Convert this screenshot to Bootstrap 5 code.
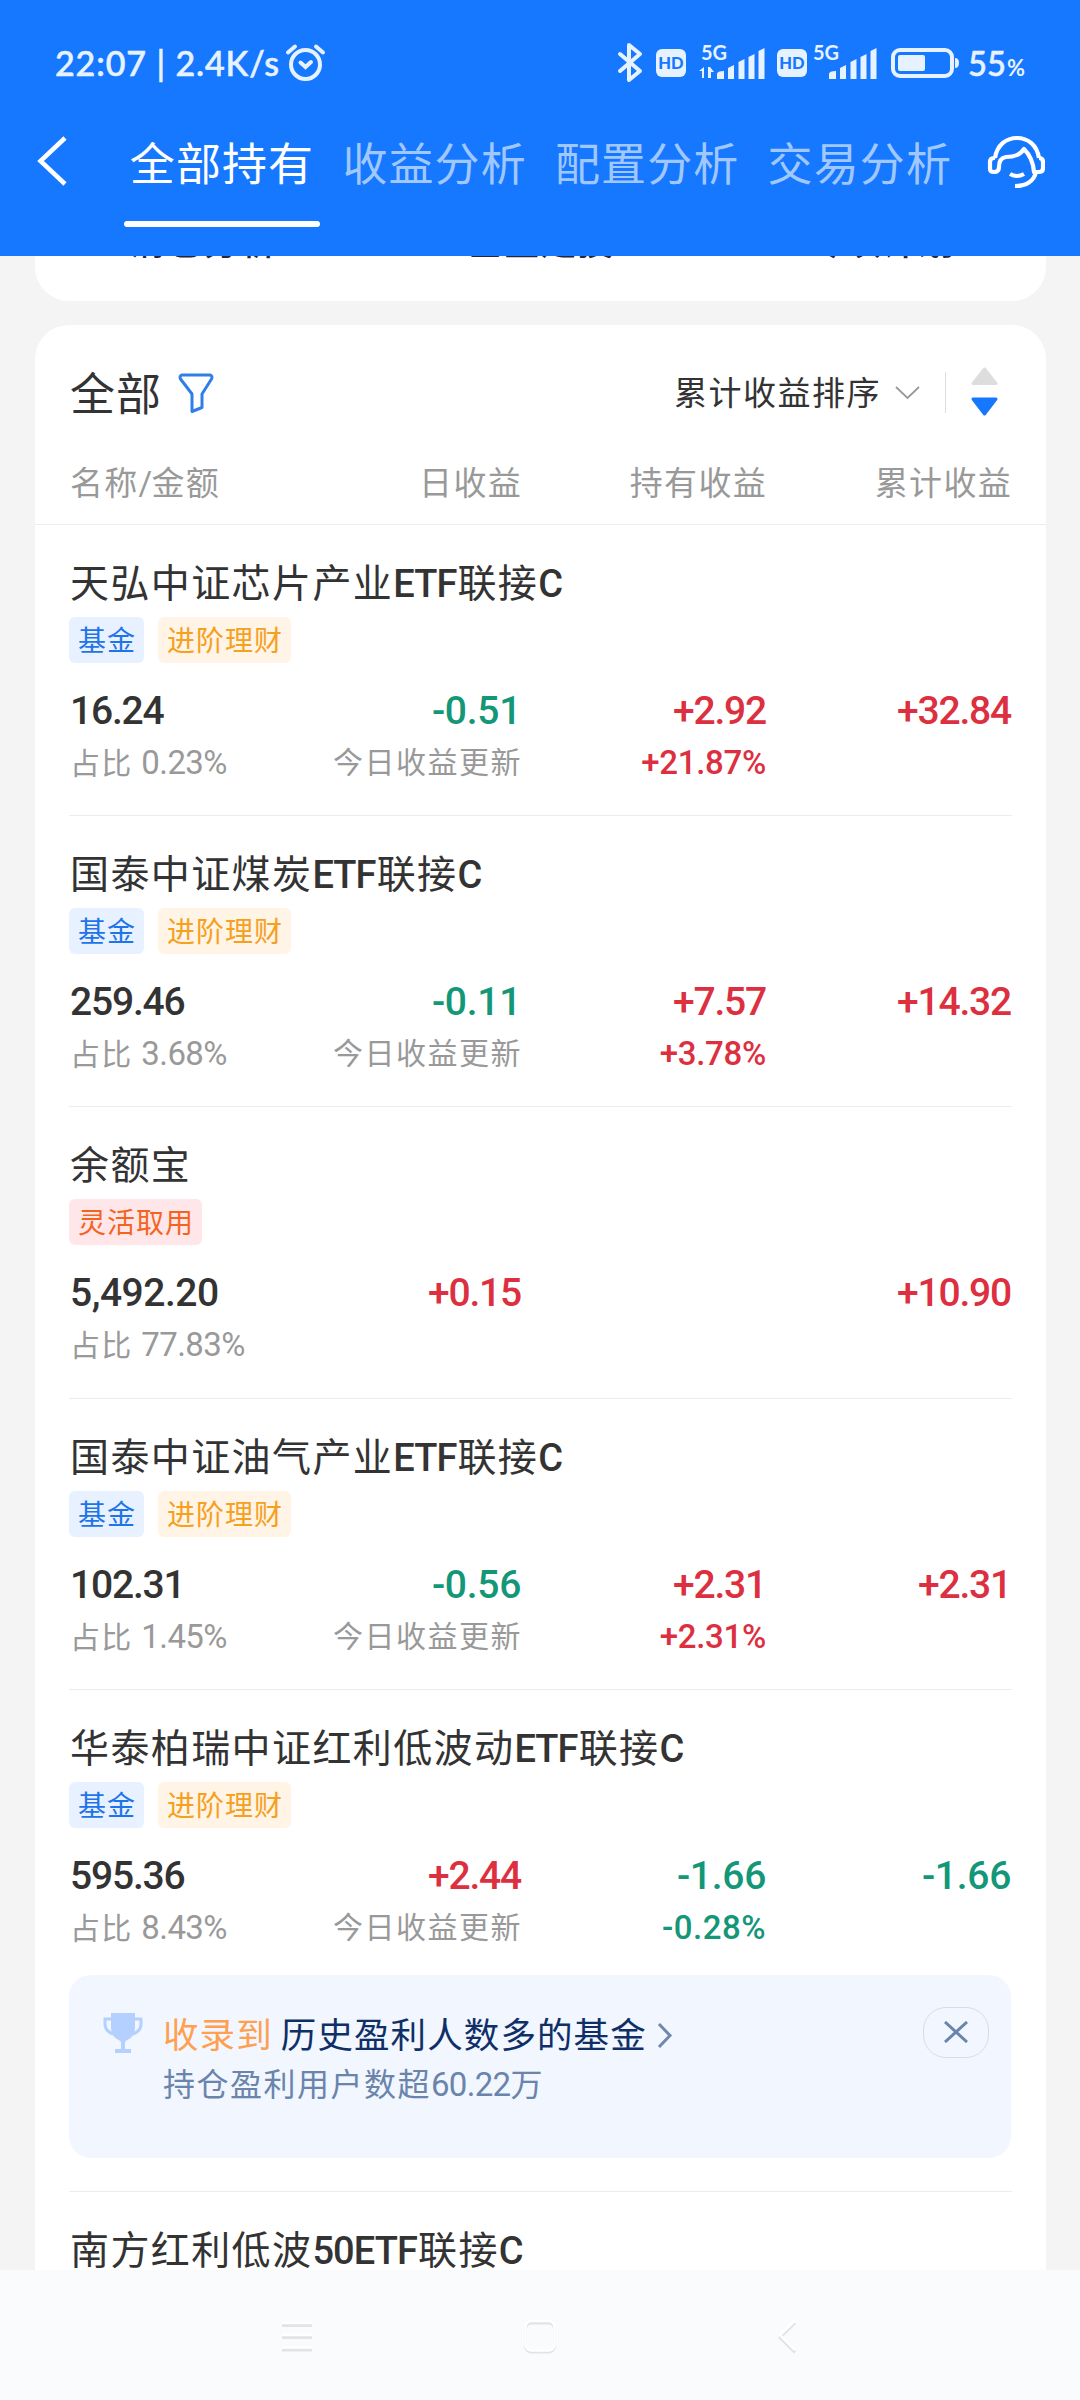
<!DOCTYPE html>
<html lang="zh-CN">
<head>
<meta charset="utf-8">
<meta name="viewport" content="width=device-width, initial-scale=1">
<title>全部持有</title>
<link href="https://cdn.jsdelivr.net/npm/bootstrap@5.3.0/dist/css/bootstrap.min.css" rel="stylesheet">
<style>
  body { width: 1080px; height: 2400px; overflow: hidden; background: #f4f4f4; color: #333; font-family: Roboto, "Noto Sans CJK SC", sans-serif; line-height: 1; }
  svg { display: block; flex: none; }
  .app-top { height: 256px; background: #1677ff; color: #fff; flex: none; }
  .status-bar { height: 96px; padding: 36px 54px 0 55px; color: #e6f2ff; }
  .status-text { font: 500 34px/54px Lato, sans-serif; letter-spacing: .9px; white-space: pre; -webkit-text-stroke: .6px currentColor; }
  .tab-row { height: 160px; padding: 0 35px 0 36px; }
  .tab-link { width: 196px; margin-right: 16.6px; height: 131px; padding-top: 45px; text-align: center; font-size: 45px; line-height: 50px; letter-spacing: 1.1px; color: #a0c8ff; white-space: nowrap; position: relative; }
  .tab-link.active { color: #fff; }
  .tab-link.active::after { content: ""; position: absolute; left: 0; bottom: 0; width: 196px; height: 6px; border-radius: 3px; background: #fff; }
  .shortcuts { height: 45px; margin: 0 34px 0 35px; border-radius: 0 0 34px 34px; flex: none; overflow: hidden; font-weight: 500; font-size: 36px; line-height: 40px; color: #26263a; letter-spacing: .7px; }
  .shortcuts > div { margin-top: -33px; text-align: center; }
  .holdings { margin: 24px 34px 0 35px; border-radius: 34px 34px 0 0; flex: 1 1 0; min-height: 0; overflow: hidden; }
  .list-top { height: 136px; padding: 0 35px 0 35px; }
  .list-title { font-size: 45px; letter-spacing: 1.1px; padding-top: 4px; margin-right: 15px; }
  .sort-label { font-size: 33px; letter-spacing: 1.5px; }
  .cols { display: grid; grid-template-columns: 207px 245px 245px 245px; padding: 0 34px; }
  .cols > div { text-align: right; white-space: nowrap; }
  .cols > div:first-child { text-align: left; padding-left: 1px; }
  .cols > .upd { margin-right: -1px; letter-spacing: 1.5px; }
  .col-head { height: 64px; border-bottom: 1px solid #ededed; font-size: 33px; letter-spacing: 1.3px; line-height: 46px; color: #999; }
  .col-head > div { margin-right: -1px; }
  .col-head s { text-decoration: none; letter-spacing: -.8px; }
  .fund { height: 291.2px; margin: 0 34px; padding-top: 35px; border-bottom: 1px solid #ededed; }
  .fund-last { height: 502.2px; }
  .fund .cols { padding: 0; }
  .fund-name { font-size: 39px; line-height: 48px; letter-spacing: 1.4px; padding-left: 1px; white-space: nowrap; }
  .fund-name b { font-weight: 500; font-size: 38px; letter-spacing: -.9px; margin-right: 1px; }
  .tags { margin-top: 9px; gap: 14px; }
  .tag { height: 46px; padding: 0 8px 0 9px; border-radius: 6px; font-size: 28px; letter-spacing: 1px; line-height: 49px; }
  .tag-blue { color: #1e74e8; background: #e7f1ff; }
  .tag-gold { color: #f5a01e; background: #fff4e5; }
  .tag-pink { color: #f5641e; background: #ffe6e9; }
  .amount { margin-top: 24px; font-weight: 500; font-size: 39px; line-height: 48px; letter-spacing: -1.2px; }
  .amount .down { letter-spacing: -.3px; }
  .amount .grouped { letter-spacing: -.5px; }
  .note { margin-top: 4px; font-size: 30px; line-height: 48px; color: #999; letter-spacing: 1.3px; }
  .note i { font-style: normal; font-size: 33px; letter-spacing: -.6px; }
  .note .rate { font-weight: 500; font-size: 33px; letter-spacing: -.3px; }
  .note .rate.down { letter-spacing: .5px; }
  .up { color: #dc3040; }
  .down { color: #149678; }
  .award { height: 183px; margin: 22px 1px 0 0; border-radius: 22px; background: #f1f6ff; padding: 32px 22px 0 33px; }
  .award-title { font-size: 35.5px; letter-spacing: 1.1px; line-height: 54px; color: #0f2f66; padding-top: 2px; }
  .award-title em { font-style: normal; color: #ffa050; margin-right: 8px; }
  .award-note { font-size: 32px; letter-spacing: 1.5px; line-height: 44px; color: #6b84ab; }
  .award-note i { font-style: normal; font-size: 33px; letter-spacing: -.7px; }
  .close-pill { width: 66px; height: 51px; border: 1.5px solid #d4deeb; border-radius: 23px; }
  .sys-nav { height: 130px; background: #fafbfd; flex: none; }
</style>
</head>
<body class="d-flex flex-column">
<header class="app-top">
  <div class="status-bar d-flex justify-content-between align-items-start">
    <div class="d-flex"><span class="status-text">22:07 | 2.4K/s</span>
      <svg class="ms-1" width="42" height="54" viewBox="284 36 42 54" fill="none" stroke="currentColor" stroke-width="4" stroke-linecap="round"><circle cx="305.500" cy="64.500" r="14.500"/><path d="M288 52.500l7-6M323 52.500l-7-6M300.500 62.500l5 4.500 5.500-5" /></svg>
    </div>
    <svg width="410" height="54" viewBox="616 36 410 54" fill="currentColor">
      <path d="M620 54l20 17-11 9V45l11 9-20 17" fill="none" stroke="currentColor" stroke-width="4" stroke-linecap="round" stroke-linejoin="round"/>
      <g id="hd"><rect x="656" y="49" width="30" height="28" rx="6"/><text x="671" y="68.500" font-size="16.500" font-weight="900" font-family="Lato" text-anchor="middle" fill="#1677ff">HD</text></g>
      <text x="701" y="59.500" font-size="20" font-weight="700" font-family="Lato">5G</text>
      <path d="M699 71l5-4v11h-2v-7zM708 67h2l4 5h-3v6h-3z"/>
      <g id="bars"><path d="M717 79v-5q0-3 7-3v8zM728 79V68l6-3v14zM738.500 79V62l6-3v20zM748.500 79V57l6-3v25zM758.500 79V51l6-3v31z"/></g>
      <use href="#hd" x="121"/>
      <text x="813" y="59.500" font-size="20" font-weight="700" font-family="Lato">5G</text>
      <use href="#bars" x="112"/>
      <rect x="893" y="50" width="59" height="26" rx="7" fill="none" stroke="currentColor" stroke-width="4"/><rect x="898" y="55" width="27" height="16" rx="2"/><path d="M955 58q4 0 4 5t-4 5z"/>
      <text x="968" y="76" font-size="35" font-weight="500" font-family="Lato" textLength="38" lengthAdjust="spacingAndGlyphs" stroke="currentColor" stroke-width=".6">55</text><text x="1007" y="76" font-size="23" font-weight="700" font-family="Lato" textLength="18" lengthAdjust="spacingAndGlyphs">%</text>
    </svg>
  </div>
  <div class="tab-row d-flex">
    <svg width="88" height="130" viewBox="36 96 88 130" fill="none" stroke="#fff" stroke-width="4.500"><path d="M65 138L40.500 161 65 184"/></svg>
    <nav class="d-flex">
      <div class="tab-link active">全部持有</div><div class="tab-link">收益分析</div><div class="tab-link">配置分析</div><div class="tab-link">交易分析</div>
    </nav>
    <svg class="ms-auto" width="58" height="130" viewBox="987 96 58 130" fill="none" stroke="#fff" stroke-width="4.200" stroke-linejoin="round"><path d="M995 158C997 145 1006 138 1017 138s20 7 22 20M995 158h-1q-4 0-4 4v7q0 3 4 3 5 0 5-5 0-9 7-10c9 0 14-2 18-8q9 9 10 23h5q4 0 4-4v-6q0-4-4-4M1036 172c-2 9-10 14-21 14M1010 174q7 4 14 0"/></svg>
  </div>
</header>
<section class="shortcuts bg-white"><div class="row g-0"><span class="col-4">清仓分析</span><span class="col-4">基金定投</span><span class="col-4 ps-2">专项计划</span></div></section>
<main class="holdings bg-white">
  <div class="list-top d-flex align-items-center">
    <span class="list-title">全部</span>
    <svg width="38" height="44" viewBox="177 370 38 44" fill="none" stroke="#2f7fe6" stroke-width="3" stroke-linejoin="round"><path d="M182 374h28q3 1 1.500 4L202 393v13.500l-10 4V393l-11.500-15q-1.500-3 1.500-4z"/></svg>
    <span class="sort-label ms-auto">累计收益排序</span>
    <svg width="130" height="52" viewBox="881 367 130 52" fill="none"><path d="M896 387l11.500 11 11.500-11" stroke="#999" stroke-width="1.800"/><path d="M945.500 372v41" stroke="#ddd"/><path d="M984.500 369L996 383.500H973z" fill="#ddd" stroke="#ddd" stroke-width="3" stroke-linejoin="round"/><path d="M973 399h23l-11.500 15z" fill="#1677ff" stroke="#1677ff" stroke-width="3" stroke-linejoin="round"/></svg>
  </div>
  <div class="cols col-head"><div>名称<s>/</s>金额</div><div>日收益</div><div>持有收益</div><div>累计收益</div></div>

  <article class="fund">
    <div class="fund-name">天弘中证芯片产业<b>ETF</b>联接<b>C</b></div>
    <div class="tags d-flex"><span class="tag tag-blue">基金</span><span class="tag tag-gold">进阶理财</span></div>
    <div class="cols amount"><div>16.24</div><div class="down">-0.51</div><div class="up">+2.92</div><div class="up">+32.84</div></div>
    <div class="cols note"><div>占比 <i>0.23%</i></div><div class="upd">今日收益更新</div><div class="rate up">+21.87%</div></div>
  </article>
  <article class="fund">
    <div class="fund-name">国泰中证煤炭<b>ETF</b>联接<b>C</b></div>
    <div class="tags d-flex"><span class="tag tag-blue">基金</span><span class="tag tag-gold">进阶理财</span></div>
    <div class="cols amount"><div>259.46</div><div class="down">-0.11</div><div class="up">+7.57</div><div class="up">+14.32</div></div>
    <div class="cols note"><div>占比 <i>3.68%</i></div><div class="upd">今日收益更新</div><div class="rate up">+3.78%</div></div>
  </article>
  <article class="fund">
    <div class="fund-name">余额宝</div>
    <div class="tags d-flex"><span class="tag tag-pink">灵活取用</span></div>
    <div class="cols amount"><div class="grouped">5,492.20</div><div class="up">+0.15</div><div></div><div class="up">+10.90</div></div>
    <div class="cols note"><div>占比 <i>77.83%</i></div></div>
  </article>
  <article class="fund">
    <div class="fund-name">国泰中证油气产业<b>ETF</b>联接<b>C</b></div>
    <div class="tags d-flex"><span class="tag tag-blue">基金</span><span class="tag tag-gold">进阶理财</span></div>
    <div class="cols amount"><div>102.31</div><div class="down">-0.56</div><div class="up">+2.31</div><div class="up">+2.31</div></div>
    <div class="cols note"><div>占比 <i>1.45%</i></div><div class="upd">今日收益更新</div><div class="rate up">+2.31%</div></div>
  </article>
  <article class="fund fund-last">
    <div class="fund-name">华泰柏瑞中证红利低波动<b>ETF</b>联接<b>C</b></div>
    <div class="tags d-flex"><span class="tag tag-blue">基金</span><span class="tag tag-gold">进阶理财</span></div>
    <div class="cols amount"><div>595.36</div><div class="up">+2.44</div><div class="down">-1.66</div><div class="down">-1.66</div></div>
    <div class="cols note"><div>占比 <i>8.43%</i></div><div class="upd">今日收益更新</div><div class="rate down">-0.28%</div></div>
    <div class="award d-flex align-items-start">
      <svg width="61" height="54" viewBox="102 2008 61 54" fill="#b4d0ff"><path d="M111 2014h24v14q0 10-8 13l-2 2v7h6v4h-16v-4h6v-7l-2-2q-8-3-8-13z"/><path d="M112 2020h-7v5q0 7 8 10M134 2020h7v5q0 7-8 10" fill="none" stroke="#b4d0ff" stroke-width="3"/></svg>
      <div>
        <div class="award-title d-flex align-items-center"><em>收录到</em><span>历史盈利人数多的基金</span>
          <svg class="ms-2" width="20" height="30" viewBox="654 2022 20 30" fill="none" stroke="#7088ae" stroke-width="3"><path d="M658 2025l11 11.500-11 11.500"/></svg></div>
        <div class="award-note">持仓盈利用户数超<i>60.22</i>万</div>
      </div>
      <div class="close-pill ms-auto d-flex align-items-center justify-content-center"><svg width="24" height="22" viewBox="0 0 24 22" stroke="#6b84ab" stroke-width="3"><path d="M1 1l22 20M23 1L1 21"/></svg></div>
    </div>
  </article>
  <article class="fund border-0">
    <div class="fund-name">南方红利低波<b>50ETF</b>联接<b>C</b></div>
  </article>
</main>
<footer class="sys-nav">
  <svg width="1080" height="130" viewBox="0 2270 1080 130" fill="none">
    <g stroke="#e2e3e5" stroke-width="3"><path d="M282 2325.500h30M282 2337.500h30M282 2350h30"/><rect x="525.500" y="2323" width="29" height="29" rx="6"/><path d="M795 2323l-15 14.500 15 15"/></g>
    <g stroke="#fff" stroke-width="2.500"><path d="M282 2323h30M282 2335h30M282 2347.500h30"/><rect x="525.500" y="2321" width="29" height="29.500" rx="6"/><path d="M795 2320.500l-15 14.500 15 15"/></g>
  </svg>
</footer>
<script src="https://cdn.jsdelivr.net/npm/bootstrap@5.3.0/dist/js/bootstrap.bundle.min.js"></script>
</body>
</html>
